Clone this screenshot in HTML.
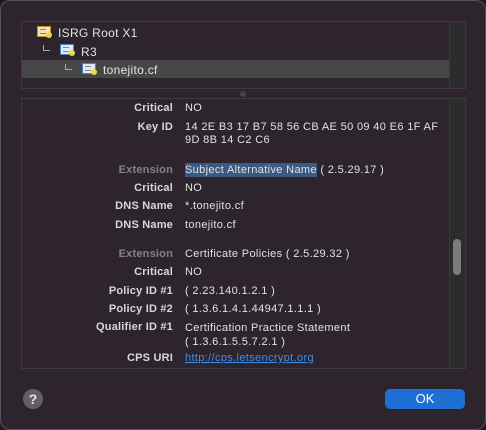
<!DOCTYPE html>
<html><head><style>
*{margin:0;padding:0;box-sizing:border-box}
body{width:486px;height:430px;background:#1c1c1e;font-family:"Liberation Sans",sans-serif;overflow:hidden;position:relative}
.win{position:absolute;left:0;top:0;width:486px;height:430px;background:#2d242d;border-radius:10px;border:1px solid #555}
.p{position:absolute;background:#2d242d;border:1px solid #3e3a3f}
.track{position:absolute;background:#2c2c2c;border-left:1px solid #3a3a3a}
.t{position:absolute;font-size:12px;color:#e4e4e4;white-space:nowrap;letter-spacing:0.3px}
.l{position:absolute;right:313px;font-size:11px;font-weight:bold;color:#d8d8d8;white-space:nowrap;text-align:right;letter-spacing:0.2px}
.l.g{color:#878087;font-weight:bold}
.v{position:absolute;left:185px;font-size:11px;color:#e2e2e2;white-space:nowrap;letter-spacing:0.35px}
.ic{position:absolute;width:14px;height:11px;border:1px solid #c98a2a;background:#f3e4b6}
.ic.b{border-color:#4a82c0;background:#dfeaf6}
.ic::after{content:"";position:absolute;right:-2px;bottom:-2px;width:6px;height:6px;border-radius:50%;background:#e8d84a}
.ic::before{content:"";position:absolute;left:2px;top:2px;width:6px;height:3px;border-top:1px solid #888;border-bottom:1px solid #888}
.arr{position:absolute;width:7px;height:6px;border-left:1px solid #aaa;border-bottom:1px solid #aaa}
</style></head><body>
<div class="win"></div>
<div class="p" style="left:21px;top:21px;width:445px;height:68px"></div>
<div class="track" style="left:449px;top:22px;width:16px;height:66px"></div>
<div style="position:absolute;left:22px;top:60px;width:427px;height:18px;background:#474747"></div>
<div class="ic" style="left:37px;top:26px"></div>
<div class="t" style="left:58px;top:26px">ISRG Root X1</div>
<div class="arr" style="left:43px;top:45px"></div>
<div class="ic b" style="left:60px;top:44px"></div>
<div class="t" style="left:81px;top:45px">R3</div>
<div class="arr" style="left:65px;top:64px"></div>
<div class="ic b" style="left:82px;top:63px"></div>
<div class="t" style="left:103px;top:63px">tonejito.cf</div>
<div style="position:absolute;left:240px;top:91px;width:6px;height:6px;border-radius:50%;background:#444"></div>

<div class="p" style="left:21px;top:98px;width:445px;height:271px"></div>
<div class="track" style="left:449px;top:99px;width:16px;height:269px"></div>
<div style="position:absolute;left:453px;top:239px;width:8px;height:36px;border-radius:4px;background:#7c7c7c"></div>

<div class="l" style="top:102px">Critical</div><div class="v" style="top:102px">NO</div>
<div class="l" style="top:121px">Key ID</div><div class="v" style="top:121px;line-height:13px">14 2E B3 17 B7 58 56 CB AE 50 09 40 E6 1F AF<br>9D 8B 14 C2 C6</div>
<div class="l g" style="top:164px">Extension</div><div class="v" style="top:164px"><span style="background:#3b5a82;padding:1px 0">Subject Alternative Name</span> ( 2.5.29.17 )</div>
<div class="l" style="top:182px">Critical</div><div class="v" style="top:182px">NO</div>
<div class="l" style="top:200px">DNS Name</div><div class="v" style="top:200px">*.tonejito.cf</div>
<div class="l" style="top:219px">DNS Name</div><div class="v" style="top:219px">tonejito.cf</div>
<div class="l g" style="top:248px">Extension</div><div class="v" style="top:248px">Certificate Policies ( 2.5.29.32 )</div>
<div class="l" style="top:266px">Critical</div><div class="v" style="top:266px">NO</div>
<div class="l" style="top:285px">Policy ID #1</div><div class="v" style="top:285px">( 2.23.140.1.2.1 )</div>
<div class="l" style="top:303px">Policy ID #2</div><div class="v" style="top:303px">( 1.3.6.1.4.1.44947.1.1.1 )</div>
<div class="l" style="top:321px">Qualifier ID #1</div><div class="v" style="top:321px;line-height:14px">Certification Practice Statement<br>( 1.3.6.1.5.5.7.2.1 )</div>
<div class="l" style="top:352px">CPS URI</div><div class="v" style="top:352px;color:#3f8ee8;text-decoration:underline">http://cps.letsencrypt.org</div>

<div style="position:absolute;left:23px;top:389px;width:20px;height:20px;border-radius:50%;background:#636063;color:#e8e8e8;font-size:14px;font-weight:bold;text-align:center;line-height:20px">?</div>
<div style="position:absolute;left:385px;top:389px;width:80px;height:20px;border-radius:5px;background:#1f6ed4;color:#fff;font-size:13px;text-align:center;line-height:20px">OK</div>
</body></html>
